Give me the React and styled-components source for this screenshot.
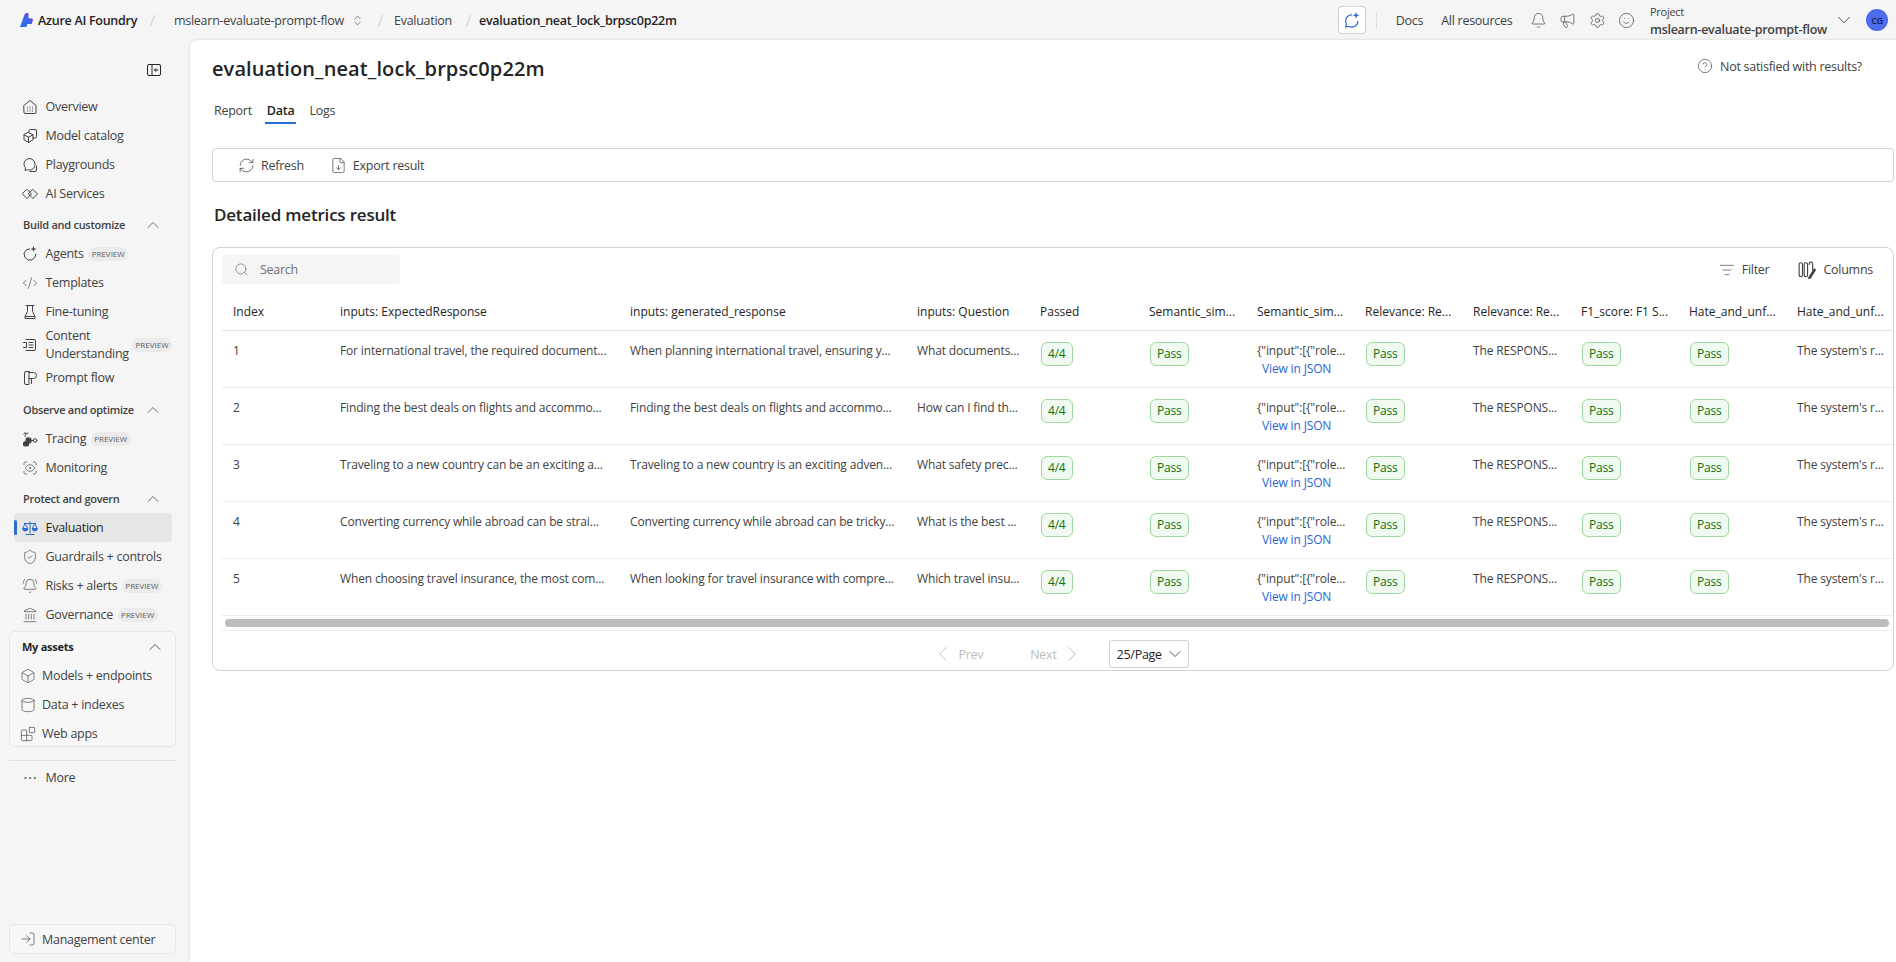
import React from "react";
import styled, { createGlobalStyle } from "styled-components";
import {
  Bell, Blocks, Box, ChevronDown, ChevronLeft, ChevronRight, ChevronUp, ChevronsUpDown, CircleHelp,
  CodeXml, Cylinder, Ellipsis, FileDown, Landmark, ListFilter, LogIn, Megaphone,
  RefreshCw, ScanEye, Search, Settings, ShieldCheck, Smile, BellRing,
} from "lucide-react";

const GlobalStyle = createGlobalStyle`
  html, body { margin: 0; padding: 0; height: 100%; overflow: hidden; background: #f5f5f5; }
  body { font-family: "Open Sans", "Noto Sans", sans-serif; font-size: 12.5px; letter-spacing: -0.27px; color: #242424; }
  * { box-sizing: border-box; }
`;

const Shell = styled.div`
  width: 1896px;
  height: 962px;
  display: flex;
  flex-direction: column;
  background: #f5f5f5;
`;

const TopBar = styled.header`
  height: 40px;
  flex: none;
  display: flex;
  align-items: center;
  padding: 0 8px 0 20px;
`;

const Crumbs = styled.nav`
  display: flex;
  align-items: center;
`;

const Brand = styled.span`
  display: flex;
  align-items: center;
  gap: 5px;
  font-weight: 600;
  width: 130px;
  white-space: nowrap;
  svg { flex: none; }
`;

const Slash = styled.span`
  color: #c4c4c4;
  font-size: 15px;
  font-weight: 300;
  width: ${(p) => p.$w}px;
`;

const Crumb = styled.span`
  display: flex;
  align-items: center;
  gap: 7px;
  color: ${(p) => (p.$current ? "#242424" : "#424242")};
  font-weight: ${(p) => (p.$current ? 600 : 400)};
  white-space: nowrap;
  width: ${(p) => p.$w}px;
`;

const TopActions = styled.div`
  margin-left: auto;
  display: flex;
  align-items: center;
  color: #424242;
`;

const CopilotButton = styled.button`
  width: 28px;
  height: 28px;
  padding: 0;
  display: grid;
  place-items: center;
  background: #fff;
  border: 1px solid #d1d1d1;
  border-radius: 4px;
`;

const TopDivider = styled.span`
  width: 1px;
  height: 17px;
  background: #e0e0e0;
  margin: 0 19px 0 10px;
`;

const TopLink = styled.span`
  margin-right: ${(p) => p.$gap}px;
  white-space: nowrap;
  color: #424242;
`;

const TopIcons = styled.div`
  display: flex;
  align-items: center;
  gap: 12.5px;
  margin-right: 15px;
  color: #424242;
`;

const ProjectBox = styled.div`
  width: 183px;
  line-height: 18px;
  margin-top: 1px;
`;

const ProjectLabel = styled.div`
  font-size: 11px;
  color: #424242;
`;

const ProjectName = styled.div`
  font-weight: 600;
  white-space: nowrap;
`;

const Avatar = styled.span`
  width: 22px;
  height: 22px;
  margin-left: 11px;
  border-radius: 50%;
  background: #4f6bed;
  color: #10204f;
  font-size: 9px;
  font-weight: 600;
  display: grid;
  place-items: center;
`;

const Body = styled.div`
  flex: 1;
  display: flex;
  min-height: 0;
`;

const Sidebar = styled.aside`
  width: 190px;
  flex: none;
  display: flex;
  flex-direction: column;
  padding-bottom: 8px;
`;

const CollapseRow = styled.div`
  height: 44px;
  margin-top: 8px;
  padding: 0 28px 0 0;
  flex: none;
  display: flex;
  align-items: center;
  justify-content: flex-end;
`;

const NavItem = styled.a`
  position: relative;
  width: 158px;
  margin-left: 14px;
  min-height: 29px;
  flex: none;
  display: flex;
  align-items: center;
  gap: 7.5px;
  padding: 1px 0 0 8px;
  border-radius: 4px;
  line-height: 18px;
  background: ${(p) => (p.$active ? "#e6e6e6" : "transparent")};
  font-weight: ${(p) => (p.$active ? 500 : 400)};
  color: ${(p) => (p.$active ? "#242424" : "#424242")};
  svg { flex: none; }
  &::before {
    content: "";
    display: ${(p) => (p.$active ? "block" : "none")};
    position: absolute;
    left: 0;
    top: 7px;
    width: 3px;
    height: 15px;
    border-radius: 2px;
    background: #2b6cd0;
  }
`;

const NavText = styled.span`
  width: ${(p) => (p.$wrap ? "82px" : "auto")};
  white-space: ${(p) => (p.$wrap ? "normal" : "nowrap")};
`;

const Badge = styled.span`
  font-size: 8px;
  letter-spacing: 0;
  color: #616161;
  background: #ebebeb;
  border-radius: 7px;
  height: 14px;
  line-height: 14px;
  padding: 0 3.5px;
  margin-left: -3px;
`;

const SectionHead = styled.div`
  width: 158px;
  margin: ${(p) => p.$top || 2}px 0 0 14px;
  height: 29px;
  flex: none;
  display: flex;
  align-items: center;
  justify-content: space-between;
  padding: 0 9px 0 9px;
  font-size: 11px;
  font-weight: 600;
  color: #424242;
`;

const AssetsCard = styled.div`
  width: 167px;
  margin: 2px 0 0 9px;
  height: 116px;
  flex: none;
  background: #f7f7f7;
  border: 1px solid #e6e6e6;
  border-radius: 6px;
`;

const AssetsHead = styled.div`
  height: 29px;
  display: flex;
  align-items: center;
  justify-content: space-between;
  padding: 0 10px 0 12px;
  font-size: 11px;
  font-weight: 700;
  color: #242424;
`;

const AssetItem = styled.a`
  height: 29px;
  display: flex;
  align-items: center;
  gap: 6px;
  padding-left: 10px;
  color: #424242;
  white-space: nowrap;
`;

const SideDivider = styled.div`
  width: 167px;
  margin: 13px 0 2px 9px;
  height: 1px;
  flex: none;
  background: #e0e0e0;
`;

const ManagementButton = styled.a`
  margin: auto 0 0 9px;
  width: 167px;
  height: 30px;
  flex: none;
  display: flex;
  align-items: center;
  gap: 6px;
  padding-left: 10px;
  background: #f7f7f7;
  border: 1px solid #e6e6e6;
  border-radius: 6px;
  color: #424242;
`;

const Main = styled.main`
  flex: 1;
  min-width: 0;
  background: #fff;
  border-top-left-radius: 8px;
  box-shadow: 0 0 3px rgba(0, 0, 0, 0.14);
  padding: 14px 2px 0 22px;
`;

const TitleRow = styled.div`
  display: flex;
  align-items: center;
  justify-content: space-between;
  height: 28px;
`;

const Title = styled.h1`
  margin: 0;
  font-size: 20px;
  letter-spacing: 0.1px;
  font-weight: 600;
  color: #242424;
`;

const Feedback = styled.span`
  display: flex;
  align-items: center;
  gap: 7px;
  margin: -4px 32px 0 0;
  color: #424242;
`;

const Tabs = styled.div`
  display: flex;
  gap: 11px;
  margin-top: 14px;
  height: 28px;
`;

const Tab = styled.span`
  padding: 1px 2px 0;
  line-height: 28px;
  height: 28px;
  color: ${(p) => (p.$active ? "#242424" : "#424242")};
  font-weight: ${(p) => (p.$active ? 600 : 400)};
  border-bottom: 2px solid ${(p) => (p.$active ? "#2b6cd0" : "transparent")};
`;

const Toolbar = styled.div`
  margin-top: 24px;
  height: 34px;
  display: flex;
  align-items: center;
  gap: 26px;
  padding-left: 25px;
  border: 1px solid #d1d1d1;
  border-radius: 4px;
`;

const ToolButton = styled.span`
  display: flex;
  align-items: center;
  gap: 6px;
  color: #424242;
  font-weight: 500;
`;

const Heading = styled.h2`
  margin: 20px 0 19px 2px;
  font-size: 17px;
  letter-spacing: -0.2px;
  line-height: 26px;
  font-weight: 600;
  color: #242424;
`;

const Card = styled.section`
  height: 424px;
  border: 1px solid #d1d1d1;
  border-radius: 8px;
  padding: 7px 0 0 9px;
`;

const CardTop = styled.div`
  display: flex;
  align-items: center;
  justify-content: space-between;
  height: 29px;
`;

const SearchBox = styled.div`
  width: 178px;
  height: 29px;
  background: #f5f5f5;
  border-radius: 4px;
  display: flex;
  align-items: center;
  gap: 11px;
  padding-left: 12px;
  color: #707070;
  svg { color: #616161; }
`;

const CardActions = styled.div`
  display: flex;
  align-items: center;
  gap: 29px;
  padding-right: 20px;
  color: #424242;
`;

const CardAction = styled.span`
  display: flex;
  align-items: center;
  gap: 7px;
`;

const TableGrid = styled.div`
  margin-top: 8px;
  overflow: hidden;
`;

const Row = styled.div`
  display: grid;
  grid-template-columns: 107px 290px 287px 123px 109px repeat(7, 108px);
  height: ${(p) => (p.$head ? 39 : 57)}px;
  border-bottom: 1px solid #ededed;
  align-items: ${(p) => (p.$head ? "center" : "start")};
  ${(p) => (p.$head ? "border-bottom-color: #e3e3e3;" : "")}
`;

const HeadCell = styled.div`
  padding: 0 0 0 11px;
  font-size: 12px;
  letter-spacing: 0;
  font-weight: 500;
  color: #242424;
  white-space: nowrap;
`;

const Cell = styled.div`
  padding: 11px 0 0 11px;
  font-size: 12px;
  letter-spacing: -0.15px;
  line-height: 18px;
  color: #424242;
  white-space: nowrap;
`;

const JsonLink = styled.a`
  display: block;
  padding-left: 5px;
  color: #2b64d6;
`;

const Tag = styled.span`
  display: inline-block;
  margin-left: 1px;
  height: 24px;
  line-height: 22px;
  padding: 0 6px;
  font-size: 12px;
  font-weight: 500;
  letter-spacing: -0.2px;
  color: #0e700e;
  background: #f1faf1;
  border: 1px solid #9fd89f;
  border-radius: 6px;
`;

const ScrollTrack = styled.div`
  height: 15px;
  padding: 3px 4px 0 3px;
  border-bottom: 1px solid #ededed;
`;

const ScrollThumb = styled.div`
  height: 8px;
  border-radius: 4px;
  background: #bdbdbd;
`;

const Pager = styled.div`
  display: flex;
  align-items: center;
  justify-content: center;
  margin-top: 9px;
  padding-left: 4px;
  height: 28px;
  color: #bdbdbd;
  font-weight: 500;
`;

const PageButton = styled.span`
  display: flex;
  align-items: center;
  gap: 2px;
  margin-right: ${(p) => p.$gap}px;
`;

const PageSelect = styled.div`
  width: 80px;
  height: 28px;
  display: flex;
  align-items: center;
  justify-content: space-between;
  padding: 0 3px 0 7px;
  border: 1px solid #d1d1d1;
  border-radius: 3px;
  color: #242424;
  font-weight: 400;
`;

const Logo = () => (
  <svg width="13" height="14" viewBox="0 0 13 14">
    <defs>
      <linearGradient id="lg" x1="0" y1="1" x2="1" y2="0">
        <stop offset="0" stopColor="#2a6ff0" />
        <stop offset="0.6" stopColor="#3f63e6" />
        <stop offset="1" stopColor="#d6309f" />
      </linearGradient>
    </defs>
    <path fill="url(#lg)" d="M0 14 4.6 1.6C5 .5 5.6 0 6.6 0H8.5v5.2h2.6c1.5 0 2.2 1.2 1.7 2.5L11.6 11H7.2L6.4 14Z" />
  </svg>
);

const CopilotIcon = () => (
  <svg width="17" height="17" viewBox="0 0 17 17" fill="none" stroke="#2b6cd0" strokeWidth="1.2">
    <path d="M9 2.8a6.1 6.1 0 0 0-6.4 6c0 1.2.3 2.2.9 3.2l-.8 3 3.1-.7a6 6 0 0 0 9-5.4" />
    <path fill="#2b6cd0" stroke="none" d="M13 0l.9 2.5 2.6.9-2.6.9L13 6.8l-.9-2.5-2.6-.9 2.6-.9Z" />
  </svg>
);

const Ico = ({ children, size = 16 }) => (
  <svg width={size} height={size} viewBox="0 0 16 16" fill="none" stroke="currentColor" strokeWidth="1" strokeLinecap="round" strokeLinejoin="round">
    {children}
  </svg>
);

const CollapseIcon = () => (
  <Ico size={16}>
    <rect x="1.5" y="2.5" width="13" height="11" rx="1.5" />
    <path d="M6 2.5v11M12 8H8.5M10 6.5 8.5 8 10 9.5" />
  </Ico>
);

const OverviewIcon = () => (
  <Ico>
    <path d="M2 6.5 8 1.5l6 5v7a1 1 0 0 1-1 1H3a1 1 0 0 1-1-1Z" />
    <path d="M5.500 8h.01M8 8h.01M10.500 8h.01M5.500 10h.01M8 10h.01M10.500 10h.01M5.500 12h.01M8 12h.01M10.500 12h.01" strokeWidth="1.2" />
  </Ico>
);

const CatalogIcon = () => (
  <Ico>
    <path d="M7 4.2V3a1.5 1.5 0 0 1 1.5-1.5H13A1.5 1.5 0 0 1 14.500 3v5.500A1.5 1.5 0 0 1 13 10h-2" />
    <path d="M6.500 4.500 11 6.800v5L6.500 14.500 2 11.800v-5Z" />
    <path d="M2 6.800l4.500 2.400L11 6.800M6.500 9.200v5.300" />
  </Ico>
);

const PlaygroundIcon = () => (
  <Ico>
    <path d="M7.500 1.500A5.500 5.500 0 0 0 2 7c0 1.500.6 2.800 1.500 3.800L3 13.500l2.500-.8A5.500 5.500 0 0 0 13 7a5.500 5.500 0 0 0-5.500-5.500Z" />
    <path d="M8 14.500h5a1.500 1.500 0 0 0 1.500-1.500V9" />
  </Ico>
);

const ServicesIcon = () => (
  <Ico>
    <path d="M5 3.500 9.500 8 5 12.500.5 8Z" />
    <path d="M11 3.500 15.500 8 11 12.500 6.500 8Z" />
  </Ico>
);

const AgentIcon = () => (
  <Ico>
    <path d="M7.500 3 4.500 3.700 2 7l.8 4 3 3h4l3-2.500 1-3.500" />
    <path fill="currentColor" stroke="none" d="M11.500 0l.8 2.200 2.200.8-2.200.8-.8 2.200-.8-2.200L8.500 3l2.200-.8Z" />
  </Ico>
);

const TuningIcon = () => (
  <Ico>
    <path d="M4 1.500h8M5.500 1.500v6L3 12.500v2h10v-2L10.500 7.500v-6M3.500 12.500h9" />
  </Ico>
);

const ContentIcon = () => (
  <Ico>
    <path d="M4 2.500h8a1.500 1.500 0 0 1 1.500 1.500v8a1.500 1.500 0 0 1-1.500 1.500H4" />
    <path d="M7 5.500h4M7 8h4M7 10.500h4M1.500 5.500h3v5h-3" />
  </Ico>
);

const FlowIcon = () => (
  <Ico>
    <path d="M7 1.500H4A1.500 1.500 0 0 0 2.500 3v10A1.500 1.500 0 0 0 4 14.500h3V1.500Z" />
    <path d="M7 2.500h4.500a2.500 2.500 0 0 1 0 6H7M9.500 8.500v5" />
  </Ico>
);

const TracingIcon = () => (
  <Ico>
    <circle cx="13" cy="9.500" r="1.800" />
    <path d="M9.500 9.500h1.700" />
    <path d="M3 5.500c0-2 1.500-3.500 3-3.500M2 3l1-1.500L4.500 3" />
    <rect x="4" y="7" width="5" height="5" rx="1" fill="currentColor" />
    <rect x="1.500" y="11" width="5" height="4" rx="1" fill="currentColor" />
  </Ico>
);

const ScalesIcon = () => (
  <svg width="16" height="16" viewBox="0 0 16 16" fill="none" stroke="#2b6cd0" strokeWidth="1">
    <path d="M8 1.500v12M2 3.500h12M3.500 14.500h9" />
    <path fill="#2b6cd0" d="M.7 8.500h5a2.500 2.500 0 0 1-5 0ZM10.300 8.500h5a2.500 2.500 0 0 1-5 0Z" />
    <path d="M3.200 3.500.7 8.500M3.200 3.500l2.500 5M12.800 3.500l-2.500 5M12.800 3.500l2.500 5" />
  </svg>
);

const ColumnsIcon = () => (
  <Ico size={18}>
    <rect x="1" y="1.500" width="3" height="12.500" rx="1.500" />
    <rect x="5.500" y="1.500" width="3" height="12.500" rx="1.500" />
    <path d="M10 3v-.5a1.500 1.500 0 0 1 3 0V8" />
    <path d="M14.500 7 10 14l-.5 1.500L11 15l4.500-7Z" fill="currentColor" />
  </Ico>
);

const up = <ChevronUp size={20} strokeWidth={0.9} />;
const lucide = { size: 16, strokeWidth: 1 };

const navTop = [
  { label: "Overview", icon: <OverviewIcon /> },
  { label: "Model catalog", icon: <CatalogIcon /> },
  { label: "Playgrounds", icon: <PlaygroundIcon /> },
  { label: "AI Services", icon: <ServicesIcon /> },
];

const navBuild = [
  { label: "Agents", icon: <AgentIcon />, preview: true },
  { label: "Templates", icon: <CodeXml {...lucide} /> },
  { label: "Fine-tuning", icon: <TuningIcon /> },
  { label: "Content Understanding", icon: <ContentIcon />, preview: true, wrap: true },
  { label: "Prompt flow", icon: <FlowIcon /> },
];

const navObserve = [
  { label: "Tracing", icon: <TracingIcon />, preview: true },
  { label: "Monitoring", icon: <ScanEye {...lucide} /> },
];

const navProtect = [
  { label: "Evaluation", icon: <ScalesIcon />, active: true },
  { label: "Guardrails + controls", icon: <ShieldCheck {...lucide} /> },
  { label: "Risks + alerts", icon: <BellRing {...lucide} />, preview: true },
  { label: "Governance", icon: <Landmark {...lucide} />, preview: true },
];

const assets = [
  { label: "Models + endpoints", icon: <Box {...lucide} /> },
  { label: "Data + indexes", icon: <Cylinder {...lucide} /> },
  { label: "Web apps", icon: <Blocks {...lucide} /> },
];

const columns = [
  "Index", "inputs: ExpectedResponse", "inputs: generated_response", "inputs: Question", "Passed",
  "Semantic_sim...", "Semantic_sim...", "Relevance: Re...", "Relevance: Re...",
  "F1_score: F1 S...", "Hate_and_unf...", "Hate_and_unf...",
];

const rows = [
  ["For international travel, the required document...", "When planning international travel, ensuring y...", "What documents..."],
  ["Finding the best deals on flights and accommo...", "Finding the best deals on flights and accommo...", "How can I find th..."],
  ["Traveling to a new country can be an exciting a...", "Traveling to a new country is an exciting adven...", "What safety prec..."],
  ["Converting currency while abroad can be strai...", "Converting currency while abroad can be tricky...", "What is the best ..."],
  ["When choosing travel insurance, the most com...", "When looking for travel insurance with compre...", "Which travel insu..."],
];

const renderNav = (items) =>
  items.map((item) => (
    <NavItem key={item.label} $active={item.active}>
      {item.icon}
      <NavText $wrap={item.wrap}>{item.label}</NavText>
      {item.preview && <Badge>PREVIEW</Badge>}
    </NavItem>
  ));

export default function App() {
  return (
    <Shell>
      <GlobalStyle />
      <TopBar>
        <Crumbs>
          <Brand><Logo />Azure AI Foundry</Brand>
          <Slash $w={24}>/</Slash>
          <Crumb $w={204}>mslearn-evaluate-prompt-flow<ChevronsUpDown size={13} strokeWidth={1.2} /></Crumb>
          <Slash $w={16}>/</Slash>
          <Crumb $w={72}>Evaluation</Crumb>
          <Slash $w={13}>/</Slash>
          <Crumb $current>evaluation_neat_lock_brpsc0p22m</Crumb>
        </Crumbs>
        <TopActions>
          <CopilotButton><CopilotIcon /></CopilotButton>
          <TopDivider />
          <TopLink $gap={18}>Docs</TopLink>
          <TopLink $gap={17}>All resources</TopLink>
          <TopIcons>
            <Bell size={17} strokeWidth={1} />
            <Megaphone size={17} strokeWidth={1} />
            <Settings size={17} strokeWidth={1} />
            <Smile size={17} strokeWidth={1} />
          </TopIcons>
          <ProjectBox>
            <ProjectLabel>Project</ProjectLabel>
            <ProjectName>mslearn-evaluate-prompt-flow</ProjectName>
          </ProjectBox>
          <ChevronDown size={22} strokeWidth={1} />
          <Avatar>CG</Avatar>
        </TopActions>
      </TopBar>
      <Body>
        <Sidebar>
          <CollapseRow><CollapseIcon /></CollapseRow>
          {renderNav(navTop)}
          <SectionHead>Build and customize{up}</SectionHead>
          {renderNav(navBuild)}
          <SectionHead $top={3}>Observe and optimize{up}</SectionHead>
          {renderNav(navObserve)}
          <SectionHead>Protect and govern{up}</SectionHead>
          {renderNav(navProtect)}
          <AssetsCard>
            <AssetsHead>My assets{up}</AssetsHead>
            {assets.map((a) => (
              <AssetItem key={a.label}>{a.icon}{a.label}</AssetItem>
            ))}
          </AssetsCard>
          <SideDivider />
          <NavItem><Ellipsis {...lucide} />More</NavItem>
          <ManagementButton><LogIn {...lucide} />Management center</ManagementButton>
        </Sidebar>
        <Main>
          <TitleRow>
            <Title>evaluation_neat_lock_brpsc0p22m</Title>
            <Feedback><CircleHelp {...lucide} />Not satisfied with results?</Feedback>
          </TitleRow>
          <Tabs>
            <Tab>Report</Tab>
            <Tab $active>Data</Tab>
            <Tab>Logs</Tab>
          </Tabs>
          <Toolbar>
            <ToolButton><RefreshCw size={17} strokeWidth={1} />Refresh</ToolButton>
            <ToolButton><FileDown size={17} strokeWidth={1} />Export result</ToolButton>
          </Toolbar>
          <Heading>Detailed metrics result</Heading>
          <Card>
            <CardTop>
              <SearchBox><Search size={15} strokeWidth={1} />Search</SearchBox>
              <CardActions>
                <CardAction><ListFilter {...lucide} />Filter</CardAction>
                <CardAction><ColumnsIcon />Columns</CardAction>
              </CardActions>
            </CardTop>
            <TableGrid>
              <Row $head>
                {columns.map((c, i) => <HeadCell key={i}>{c}</HeadCell>)}
              </Row>
              {rows.map((r, i) => (
                <Row key={i}>
                  <Cell>{i + 1}</Cell>
                  {r.map((text, j) => <Cell key={j}>{text}</Cell>)}
                  <Cell><Tag>4/4</Tag></Cell>
                  <Cell><Tag>Pass</Tag></Cell>
                  <Cell>
                    {'{"input":[{"role...'}
                    <JsonLink>View in JSON</JsonLink>
                  </Cell>
                  <Cell><Tag>Pass</Tag></Cell>
                  <Cell>The RESPONS...</Cell>
                  <Cell><Tag>Pass</Tag></Cell>
                  <Cell><Tag>Pass</Tag></Cell>
                  <Cell>The system's r...</Cell>
                </Row>
              ))}
            </TableGrid>
            <ScrollTrack><ScrollThumb /></ScrollTrack>
            <Pager>
              <PageButton $gap={47}><ChevronLeft size={26} strokeWidth={0.9} />Prev</PageButton>
              <PageButton $gap={24}>Next<ChevronRight size={26} strokeWidth={0.9} /></PageButton>
              <PageSelect>25/Page<ChevronDown size={20} strokeWidth={0.9} /></PageSelect>
            </Pager>
          </Card>
        </Main>
      </Body>
    </Shell>
  );
}
